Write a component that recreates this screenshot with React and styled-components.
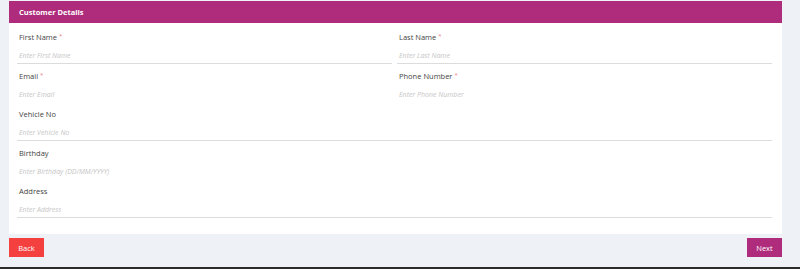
import React from "react";
import styled, { createGlobalStyle } from "styled-components";

const Global = createGlobalStyle`
  html, body { margin: 0; padding: 0; background: #2a2a2a; }
  body { font-family: "Open Sans", "Noto Sans", sans-serif; }
  * { box-sizing: border-box; }
`;

const Page = styled.div`
  height: 267px;
  background: #eef1f5;
  padding: 1px 18px 0 9px;
  display: flex;
  flex-direction: column;
`;

const Card = styled.div`
  background: #fff;
  height: 233px;
  display: flex;
  flex-direction: column;
`;

const Header = styled.div`
  background: #ae2c7b;
  color: #fff;
  height: 22px;
  display: flex;
  align-items: center;
  padding-left: 10px;
  font-size: 7.5px;
  font-weight: 700;
`;

const Body = styled.div`
  padding: 9px 9px 0 8px;
  display: grid;
  grid-template-columns: 375px 375px;
  column-gap: 5px;
`;

const Field = styled.div`
  grid-column: ${(p) => (p.$full ? "1 / span 2" : "auto")};
  display: flex;
  flex-direction: column;
  margin-bottom: 6.5px;
`;

const Label = styled.div`
  font-size: 7.5px;
  color: #444;
  padding-left: 2px;
  line-height: 10px;
  margin-bottom: 9px;
`;

const Req = styled.span`
  color: #ef7d8a;
  margin-left: 2px;
  font-size: 6px;
  vertical-align: top;
  line-height: 8px;
`;

const Input = styled.div`
  font-size: 7px;
  font-style: italic;
  color: #c6c6c6;
  padding: 0 0 2px 2px;
  line-height: 10px;
  border-bottom: 1px solid ${(p) => (p.$line ? "#dcdcdc" : "transparent")};
`;

const Footer = styled.div`
  display: flex;
  justify-content: space-between;
  margin-top: 4px;
`;

const Button = styled.button`
  border: none;
  height: 19px;
  width: 35px;
  padding: 0;
  font-family: inherit;
  font-size: 7.5px;
  color: #fff;
  background: ${(p) => (p.$variant === "back" ? "#f4403f" : "#ae2c7b")};
`;

const fields = [
  { label: "First Name", ph: "Enter First Name", req: true, line: true },
  { label: "Last Name", ph: "Enter Last Name", req: true, line: true },
  { label: "Email", ph: "Enter Email", req: true, line: false },
  { label: "Phone Number", ph: "Enter Phone Number", req: true, line: false },
  { label: "Vehicle No", ph: "Enter Vehicle No", full: true, line: true },
  { label: "Birthday", ph: "Enter Birthday (DD/MM/YYYY)", full: true, line: false },
  { label: "Address", ph: "Enter Address", full: true, line: true },
];

export default function App() {
  return (
    <>
      <Global />
      <Page>
        <Card>
          <Header>Customer Details</Header>
          <Body>
            {fields.map((f) => (
              <Field key={f.label} $full={f.full}>
                <Label>
                  {f.label}
                  {f.req && <Req>*</Req>}
                </Label>
                <Input $line={f.line}>{f.ph}</Input>
              </Field>
            ))}
          </Body>
        </Card>
        <Footer>
          <Button $variant="back">Back</Button>
          <Button $variant="next">Next</Button>
        </Footer>
      </Page>
    </>
  );
}
